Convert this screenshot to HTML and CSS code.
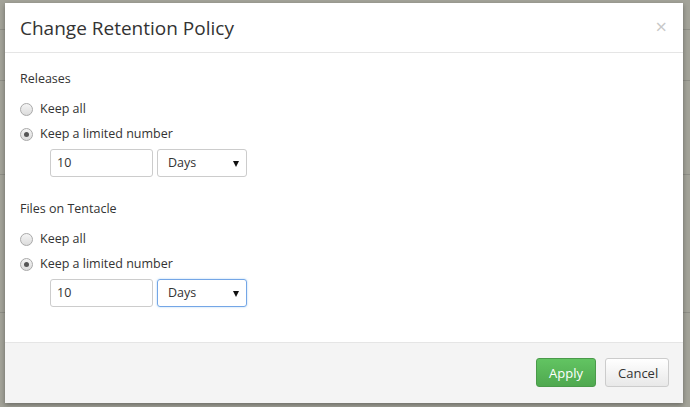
FILE: index.html
```html
<!DOCTYPE html>
<html>
<head>
<meta charset="utf-8">
<link rel="stylesheet" href="styles.css">
</head>
<body>
<div class="page">
  <div class="bg-line l1"></div>
  <div class="bg-line l2"></div>
  <div class="bg-line l3"></div>
  <div class="bg-line l4"></div>
  <div class="modal">
    <div class="modal-header">
      <h3 class="title">Change Retention Policy</h3>
      <span class="close">&times;</span>
    </div>
    <div class="modal-body">
      <div class="group">
        <div class="group-label">Releases</div>
        <label class="radio"><span class="dot"></span>Keep all</label>
        <label class="radio"><span class="dot checked"></span>Keep a limited number</label>
        <div class="inputs">
          <div class="num">10</div>
          <div class="select">Days<span class="caret"></span></div>
        </div>
      </div>
      <div class="group">
        <div class="group-label">Files on Tentacle</div>
        <label class="radio"><span class="dot"></span>Keep all</label>
        <label class="radio"><span class="dot checked"></span>Keep a limited number</label>
        <div class="inputs">
          <div class="num">10</div>
          <div class="select focus">Days<span class="caret"></span></div>
        </div>
      </div>
    </div>
    <div class="modal-footer">
      <button class="btn btn-success">Apply</button>
      <button class="btn btn-default">Cancel</button>
    </div>
  </div>
</div>
</body>
</html>
```
FILE: styles.css
```css
html, body { margin: 0; padding: 0; }
body {
  font-family: "Open Sans", "Noto Sans", sans-serif;
  color: #333;
}
.page {
  position: relative;
  width: 690px;
  height: 407px;
  background: #a3a399;
  overflow: hidden;
}
.bg-line {
  position: absolute;
  left: 0;
  right: 0;
  height: 1px;
  background: #8f8f87;
}
.l1 { top: 29px; }
.l2 { top: 80px; }
.l3 { top: 174px; }
.l4 { top: 312px; }
.modal {
  position: absolute;
  left: 5px;
  top: 3px;
  width: 678px;
  height: 400px;
  background: #fff;
  box-shadow: 0 2px 5px rgba(0,0,0,0.35);
  display: flex;
  flex-direction: column;
}
.modal-header {
  height: 49px;
  flex-shrink: 0;
  border-bottom: 1px solid #e5e5e5;
  display: flex;
  align-items: center;
  justify-content: space-between;
  padding: 0 16px 0 15px;
}
.title {
  margin: 0;
  font-size: 19px;
  font-weight: 400;
  color: #333;
}
.close {
  color: #c8c8c8;
  font-size: 20px;
  line-height: 1;
  margin-top: -1px;
}
.modal-body {
  flex: 1;
  padding: 16px 15px 0 15px;
  font-size: 12.5px;
}
.group { margin-bottom: 22px; }
.group-label {
  height: 20px;
  line-height: 20px;
}
.radio {
  display: flex;
  align-items: center;
  height: 20px;
  line-height: 20px;
  margin-top: 5px;
}
.group-label + .radio { margin-top: 10px; }
.dot {
  width: 11px;
  height: 11px;
  border: 1px solid #a9a9a9;
  border-radius: 50%;
  background: linear-gradient(#f4f4f4, #dcdcdc);
  margin-right: 7px;
  position: relative;
}
.dot.checked::after {
  content: "";
  position: absolute;
  left: 3px;
  top: 3px;
  width: 5px;
  height: 5px;
  border-radius: 50%;
  background: #555;
}
.inputs {
  display: flex;
  gap: 4px;
  margin: 5px 0 0 30px;
}
.num, .select {
  height: 26px;
  border: 1px solid #ccc;
  border-radius: 3px;
  line-height: 26px;
  box-sizing: content-box;
}
.num {
  width: 95px;
  padding-left: 6px;
}
.select {
  width: 78px;
  padding-left: 10px;
  position: relative;
}
.select.focus {
  border-color: #74a6e6;
  box-shadow: 0 0 2px rgba(102,175,233,0.6);
}
.caret {
  position: absolute;
  right: 7px;
  top: 11px;
  width: 0;
  height: 0;
  border-left: 3.5px solid transparent;
  border-right: 3.5px solid transparent;
  border-top: 6px solid #111;
}
.modal-footer {
  height: 59px;
  flex-shrink: 0;
  border-top: 1px solid #e5e5e5;
  background: #f4f4f4;
  display: flex;
  align-items: center;
  justify-content: flex-end;
  gap: 9px;
  padding: 0 14px 1px 0;
}
.btn {
  font-family: "Open Sans", "Noto Sans", sans-serif;
  font-size: 13px;
  height: 29px;
  border-radius: 3px;
  padding: 0 12px;
  cursor: pointer;
}
.btn-success {
  width: 60px;
  color: #fff;
  background: linear-gradient(#62c462, #4fa84f);
  border: 1px solid #4a9a4a;
}
.btn-default {
  width: 64px;
  color: #333;
  background: linear-gradient(#fff, #e8e8e8);
  border: 1px solid #ccc;
}
```
